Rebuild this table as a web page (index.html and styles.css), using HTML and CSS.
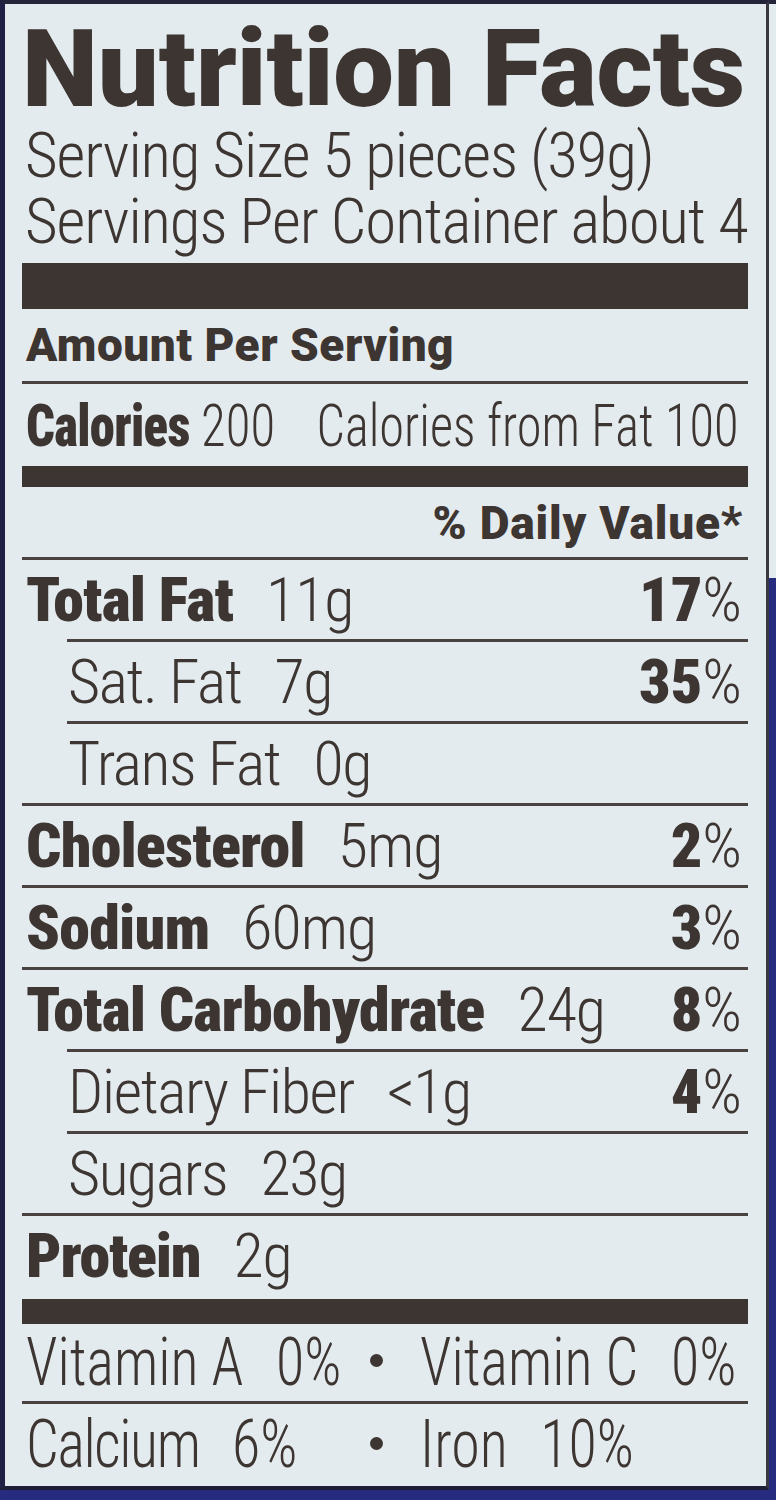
FILE: index.html
```html
<!DOCTYPE html>
<html lang="en">
<head>
<meta charset="utf-8">
<title>Nutrition Facts</title>
<link rel="stylesheet" href="styles.css">
</head>
<body>
<div class="page">
  <div class="label">
    <h1 class="title">Nutrition Facts</h1>
    <p class="serving">Serving Size 5 pieces (39g)</p>
    <p class="serving">Servings Per Container about 4</p>
    <div class="bar bar-thick"></div>
    <p class="amount">Amount Per Serving</p>
    <div class="rule"></div>
    <div class="row calories">
      <span class="cal-left"><b>Calories</b> 200</span>
      <span class="cal-right"><span class="cal-right-text">Calories from Fat 100</span></span>
    </div>
    <div class="bar bar-medium"></div>
    <p class="dv">% Daily Value*</p>
    <div class="rule"></div>

    <div class="row"><span><b>Total Fat</b><span class="amt">11g</span></span><span class="pct"><b>17</b>%</span></div>
    <div class="rule indent"></div>
    <div class="row sub"><span>Sat. Fat<span class="amt">7g</span></span><span class="pct"><b>35</b>%</span></div>
    <div class="rule indent"></div>
    <div class="row sub"><span>Trans Fat<span class="amt">0g</span></span></div>
    <div class="rule"></div>
    <div class="row"><span><b>Cholesterol</b><span class="amt">5mg</span></span><span class="pct"><b>2</b>%</span></div>
    <div class="rule"></div>
    <div class="row"><span><b>Sodium</b><span class="amt">60mg</span></span><span class="pct"><b>3</b>%</span></div>
    <div class="rule"></div>
    <div class="row"><span><b>Total Carbohydrate</b><span class="amt">24g</span></span><span class="pct"><b>8</b>%</span></div>
    <div class="rule indent"></div>
    <div class="row sub"><span>Dietary Fiber<span class="amt">&lt;1g</span></span><span class="pct"><b>4</b>%</span></div>
    <div class="rule indent"></div>
    <div class="row sub"><span>Sugars<span class="amt">23g</span></span></div>
    <div class="rule"></div>
    <div class="row protein"><span><b>Protein</b><span class="amt">2g</span></span></div>
    <div class="bar bar-low"></div>

    <div class="vit vit-a">
      <span class="vit-text">Vitamin A<span class="amt">0%</span></span>
      <span class="dot"></span>
      <span class="vit-text vit-right">Vitamin C<span class="amt">0%</span></span>
    </div>
    <div class="rule"></div>
    <div class="vit vit-b">
      <span class="vit-text"><span class="tight">Calcium</span><span class="amt">6%</span></span>
      <span class="dot"></span>
      <span class="vit-text vit-right">Iron<span class="amt">10%</span></span>
    </div>
  </div>
  <div class="side"><div class="side-top"></div></div>
</div>
</body>
</html>
```
FILE: styles.css
```css
html, body {
  margin: 0;
  padding: 0;
}
body {
  background: #262a7e;
}
.page {
  display: flex;
  width: 776px;
  height: 1500px;
  background: #272b80;
  overflow: hidden;
}
.label {
  box-sizing: border-box;
  width: 769px;
  height: 1490px;
  flex: none;
  background: #e4ebee;
  border-top: 4px solid #23233a;
  border-left: 5px solid #1f2044;
  border-right: 3px solid #3a3840;
  border-bottom: 4px solid #1e1e36;
  padding: 0 18px 0 17px;
  color: #3d3532;
  font-family: "Roboto Condensed", "Roboto", sans-serif;
  font-stretch: condensed;
  font-weight: 300;
  display: flex;
  flex-direction: column;
}
.side {
  flex: 1;
  display: flex;
  flex-direction: column;
}
.side-top {
  height: 574px;
  background: #e4ebee;
  border-top: 4px solid #23233a;
}
b {
  font-family: "Roboto", sans-serif;
  font-stretch: condensed;
  font-weight: 900;
  letter-spacing: -0.8px;
}
.title {
  margin: 0;
  padding: 11px 0 0 0;
  height: 108px;
  line-height: 108px;
  font-family: "Roboto", sans-serif;
  font-stretch: normal;
  font-weight: 900;
  font-size: 108px;
  letter-spacing: 0;
  white-space: nowrap;
}
.serving {
  margin: 0;
  padding-left: 3px;
  height: 66px;
  line-height: 66px;
  font-size: 63px;
  letter-spacing: -1.1px;
  white-space: nowrap;
}
.bar {
  background: #3c3532;
  flex: none;
}
.bar-thick {
  margin-top: 8px;
  height: 46px;
}
.bar-medium {
  height: 21px;
}
.bar-low {
  height: 25px;
}
.amount {
  margin: 0;
  padding: 1px 0 0 4px;
  height: 71px;
  line-height: 71px;
  font-family: "Roboto", sans-serif;
  font-stretch: normal;
  font-weight: 900;
  font-size: 46px;
  letter-spacing: 0.5px;
  white-space: nowrap;
}
.rule {
  height: 3px;
  background: #4a4240;
  flex: none;
}
.rule.indent {
  margin-left: 45px;
}
.row {
  display: flex;
  justify-content: space-between;
  align-items: baseline;
  height: 79px;
  line-height: 79px;
  padding: 0 6px 0 4px;
  font-size: 62px;
  letter-spacing: -1px;
  white-space: nowrap;
  flex: none;
}
.row.sub {
  padding-left: 46px;
  letter-spacing: -1.4px;
}
.row.calories {
  height: 80px;
  line-height: 80px;
  padding: 2px 10px 0 4px;
  font-size: 60px;
  letter-spacing: 0;
}
.cal-left {
  flex: none;
  display: inline-block;
  transform: scaleX(0.845);
  transform-origin: left center;
}
.cal-right {
  flex: 1;
  min-width: 0;
  display: flex;
  justify-content: flex-end;
}
.cal-right-text {
  flex: none;
  display: inline-block;
  transform: scaleX(0.84);
  transform-origin: right center;
}
.row.protein {
  height: 83px;
}
.row.protein b {
  letter-spacing: -1.2px;
}
.amt {
  margin-left: 33px;
}
.pct {
  letter-spacing: 0;
}
.pct b {
  letter-spacing: 0;
}
.dv {
  margin: 0;
  padding: 2px 5px 0 0;
  height: 68px;
  line-height: 68px;
  text-align: right;
  font-family: "Roboto", sans-serif;
  font-stretch: normal;
  font-weight: 900;
  font-size: 46px;
  letter-spacing: 0.8px;
  white-space: nowrap;
}
.vit {
  display: grid;
  grid-template-columns: 324px 52px 1fr;
  align-items: center;
  padding-left: 4px;
  font-size: 66px;
  white-space: nowrap;
  flex: none;
}
.vit-a {
  height: 77px;
  line-height: 77px;
}
.vit-b {
  height: 82px;
  line-height: 82px;
}
.vit-text {
  display: inline-block;
  transform: scaleX(0.88);
  transform-origin: left center;
}
.vit-text .amt {
  margin-left: 37px;
}
.tight {
  letter-spacing: -1.6px;
}
.vit-right {
  margin-left: 18px;
}
.dot {
  justify-self: center;
  width: 13px;
  height: 13px;
  margin-bottom: 4px;
  border-radius: 50%;
  background: #3d3532;
}
```
